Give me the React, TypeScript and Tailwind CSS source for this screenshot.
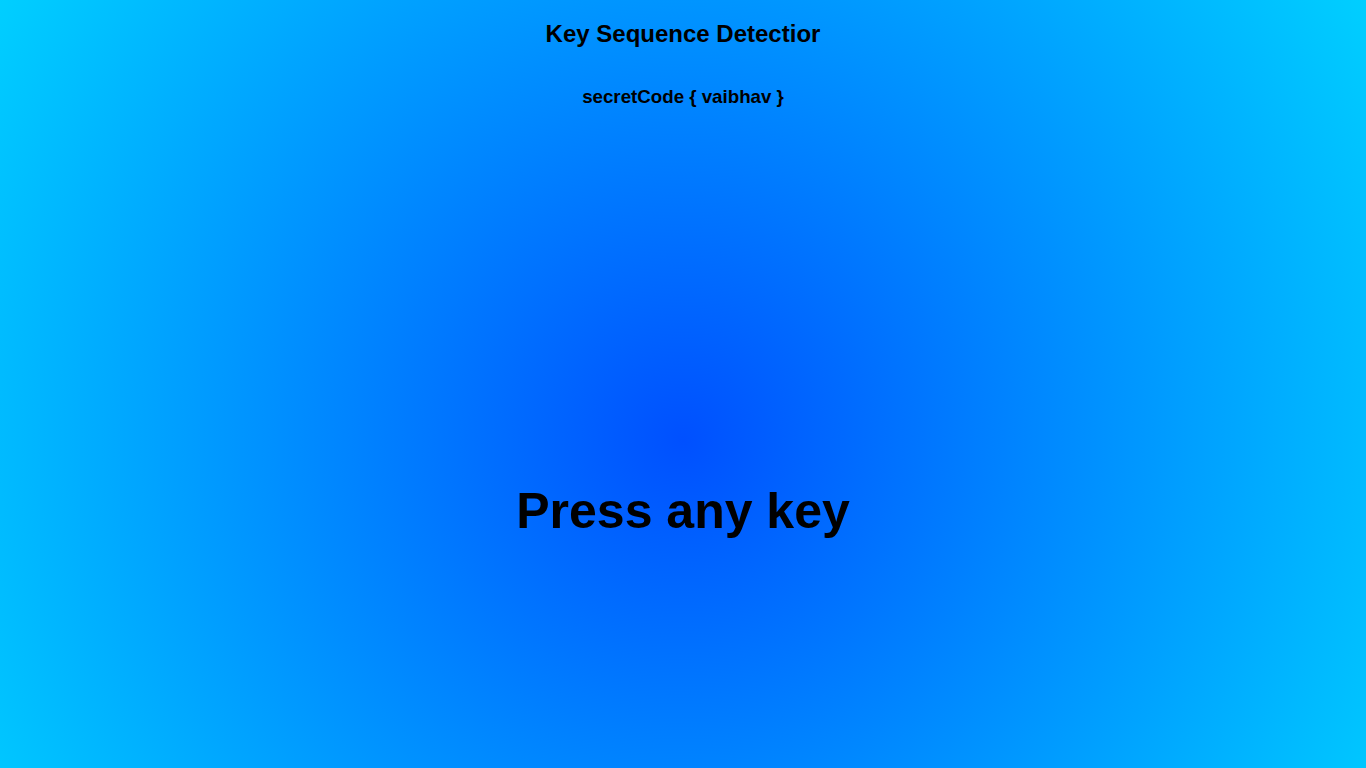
export default function App() {
  return (
    <div
      className="w-full h-[768px] overflow-hidden flex flex-col items-center text-black font-['Liberation_Sans',Arial,sans-serif] font-bold"
      style={{ background: "radial-gradient(circle farthest-corner at 683px 440px, #0050ff 0%, #00cfff 100%)" }}
    >
      <h1 className="mt-[19px] text-[24px] leading-[30px]">Key Sequence Detectior</h1>
      <h2 className="mt-[36px] text-[18.72px] leading-[24px]">secretCode {"{"} vaibhav {"}"}</h2>
      <div className="mt-[374px] text-[50px] leading-[56px]">Press any key</div>
    </div>
  );
}
